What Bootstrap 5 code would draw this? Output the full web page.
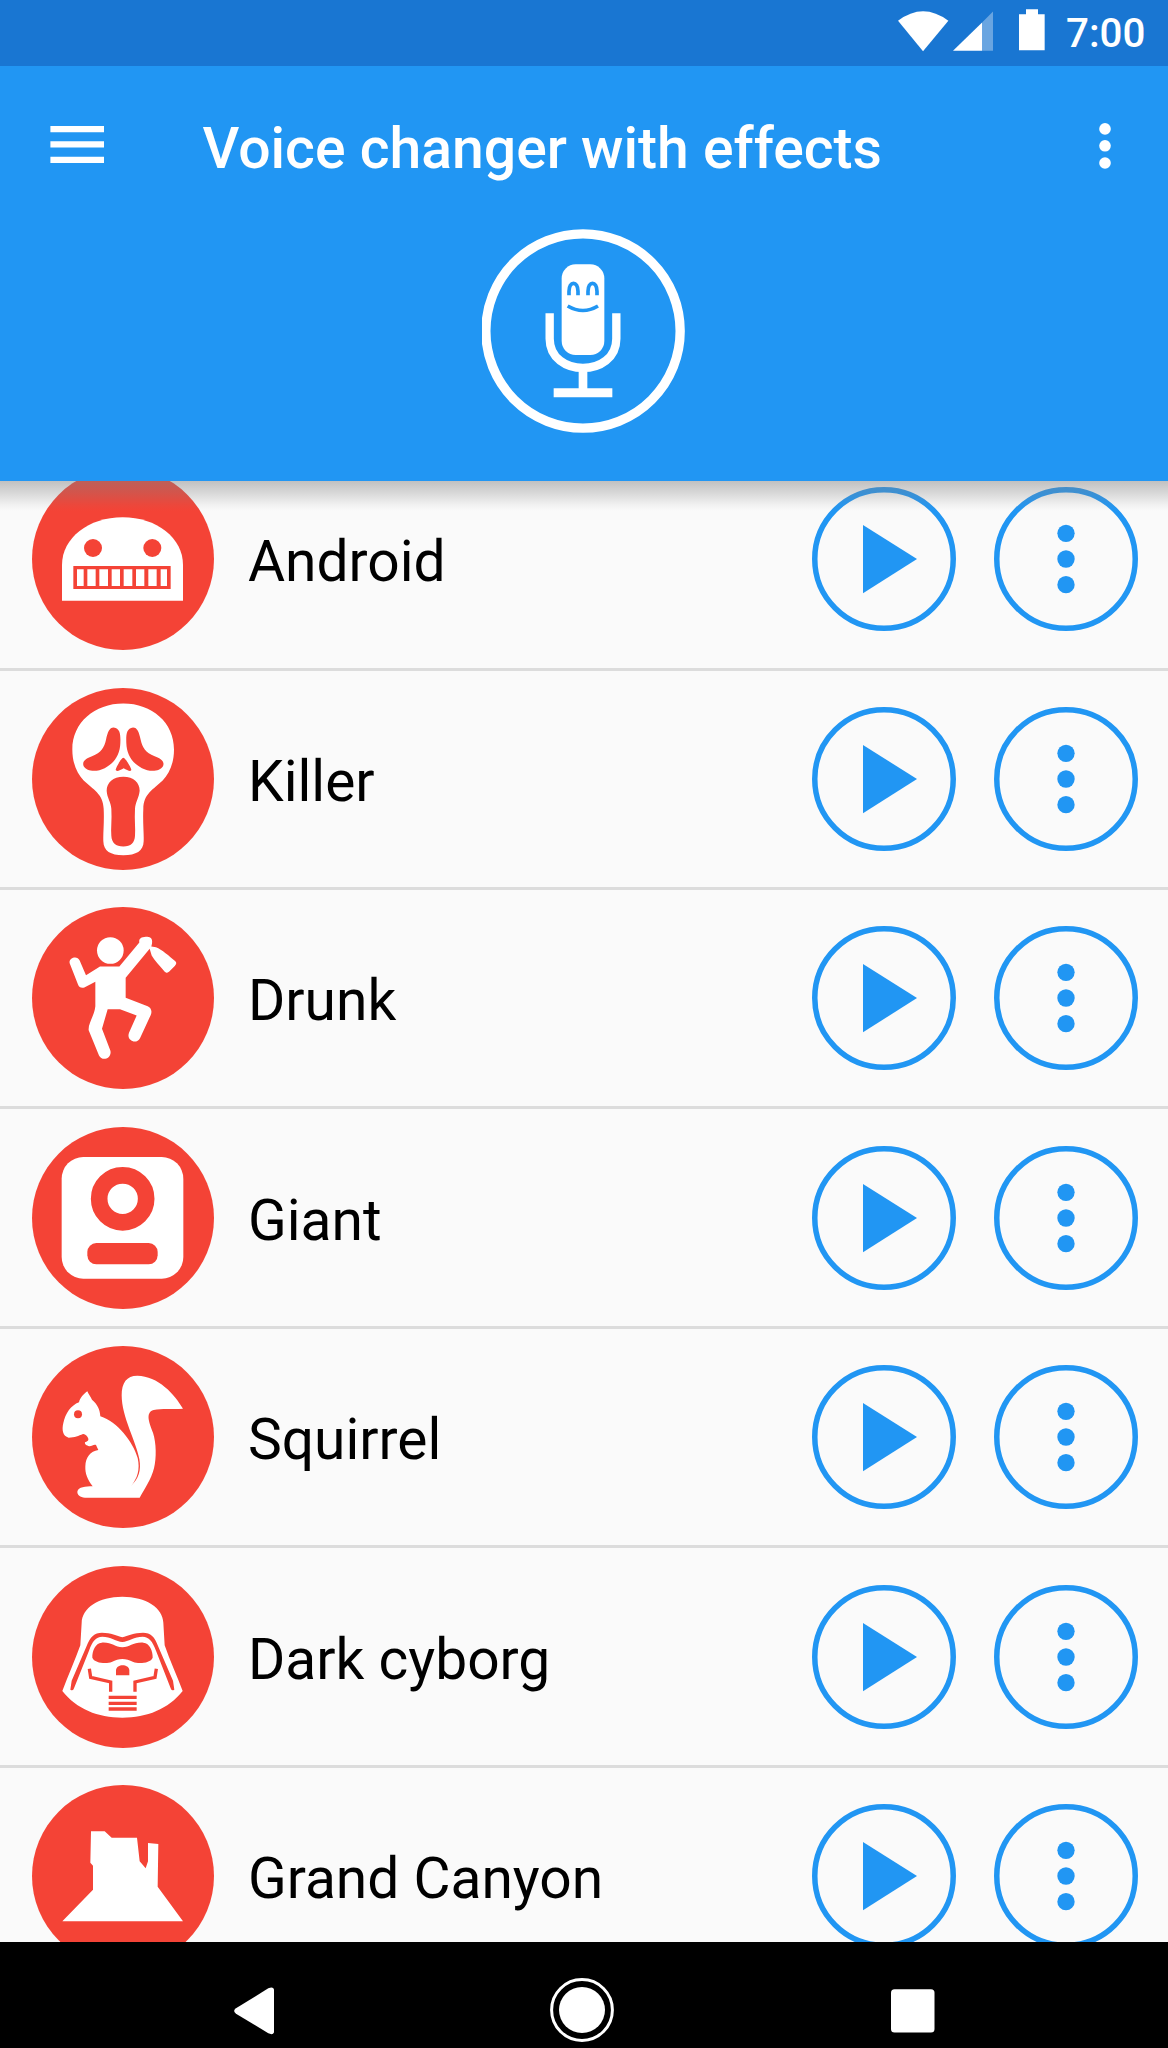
<!DOCTYPE html>
<html lang="en">
<head>
<meta charset="utf-8">
<meta name="viewport" content="width=device-width, initial-scale=1">
<title>Voice changer with effects</title>
<link href="https://cdn.jsdelivr.net/npm/bootstrap@5.3.0/dist/css/bootstrap.min.css" rel="stylesheet">
<style>
  :root { --vc-blue: #2196f3; --vc-dark: #1976d2; --vc-red: #f44336; }
  body { font-family: Roboto, "Liberation Sans", sans-serif; background: #fafafa; color: #000; }
  svg { display: block; flex: none; }
  .screen { width: 1168px; height: 2048px; }
  .statusbar { height: 66px; background: var(--vc-dark); padding-right: 24px; }
  .signal { margin-left: 4.6px; }
  .battery { margin-left: 25.4px; }
  .clock { font-size: 40.3px; font-weight: 500; line-height: 67px; width: 78px; margin-left: 21.3px; }
  .appbar { height: 415px; background: var(--vc-blue); z-index: 2; }
  .appbar::after { content: ""; position: absolute; left: 0; right: 0; top: 100%; height: 30px;
    background: linear-gradient(rgba(128,128,128,.47), rgba(128,128,128,.28) 40%, rgba(128,128,128,.07) 80%, rgba(128,128,128,0)); }
  .toolbar { height: 162.7px; padding: 0 57px 0 50px; }
  .app-title { font-size: 57.1px; font-weight: 500; line-height: 66px; margin-left: 98.6px; padding-top: 3px; white-space: nowrap; }
  .effects { margin-top: -29.9px; min-height: 0; }
  .effect { height: 219.45px; flex: none; border-bottom: 3px solid #dcdcdc; padding: 0 30.4px 0 32px; }
  .avatar { fill: #fff; stroke: none; background: var(--vc-red); width: 182px; height: 182px; }
  .avatar .cut { fill: var(--vc-red); }
  .avatar .cutline { fill: none; stroke: var(--vc-red); }
  .effect-name { font-size: 56.9px; line-height: 66px; margin-left: 34px; padding-top: 6px; }
  .round-btn svg { width: 144px; height: 144px; fill: var(--vc-blue); }
  .round-btn .ring { fill: none; stroke: var(--vc-blue); stroke-width: 16.5; }
  .round-btns { gap: 38px; }
  .softkeys { height: 106px; padding: 32px 0 0 233.7px; gap: 276.5px; z-index: 3; }
</style>
</head>
<body>
<div class="screen d-flex flex-column overflow-hidden">
  <div class="statusbar d-flex justify-content-end text-white flex-shrink-0">
    <svg width="50.4" height="66" viewBox="115 0 151 198" fill="#fff"><path d="M115 62Q190 5 266 62L190 154Z"/></svg>
    <svg class="signal" width="40" height="66" viewBox="280 0 121 198" fill="#fff"><path d="M368 67L401 34V153H368Z" opacity=".35"/><path d="M280 153L368 67V153Z"/></svg>
    <svg class="battery" width="26" height="66" viewBox="477 0 78 198" fill="#fff"><path d="M498 28H534V43H554V151H477V43H498Z"/></svg>
    <span class="clock">7:00</span>
  </div>

  <header class="appbar position-relative text-white flex-shrink-0">
    <div class="toolbar d-flex align-items-center">
      <svg width="54" height="42" viewBox="0 0 54 42" fill="#fff"><path d="M.4 0H54V6.3H.4ZM.4 15.3H54V21.6H.4ZM.4 30.7H54V37H.4Z"/></svg>
      <h1 class="app-title mb-0">Voice changer with effects</h1>
      <svg class="ms-auto" width="12" height="48" viewBox="0 0 12 48" fill="#fff"><circle cx="6" cy="5.9" r="5.8"/><circle cx="6" cy="22.8" r="5.8"/><circle cx="6" cy="40" r="5.8"/></svg>
    </div>
    <svg class="mx-auto" width="204" height="204" viewBox="66 56 612 612">
      <circle cx="369" cy="362" r="291.500" fill="none" stroke="#fff" stroke-width="28"/>
      <rect x="305" y="162" width="128" height="272" rx="42" fill="#fff"/>
      <g fill="none" stroke="#2196f3" stroke-width="11"><path d="M327 255V243C327 211 354 211 354 243V255M384 255V243C384 211 411 211 411 243V255"/><path d="M323 287Q369 314 414 287"/></g>
      <path d="M269 309V385C269 502 469 502 469 385V309" fill="none" stroke="#fff" stroke-width="25"/>
      <path d="M356 480H382V534H457V561H281V534H356Z" fill="#fff"/>
    </svg>
  </header>

  <main class="effects d-flex flex-column flex-fill overflow-hidden" id="effects">
    <div class="effect d-flex align-items-center">
      <svg class="avatar rounded-circle" viewBox="95 -5 546 546">
        <path d="M185 393V286C185 205 265 143 367 143S548 205 548 286V393Z"/>
        <circle class="cut" cx="278" cy="235" r="27"/><circle class="cut" cx="456" cy="235" r="27"/>
        <path class="cut" d="M219 289H511V358H219Z"/>
        <path d="M230 299H250V349H230ZM261 299H286V349H261ZM297 299H323V349H297ZM334 299H359V349H334ZM370 299H396V349H370ZM407 299H432V349H407ZM444 299H469V349H444ZM481 299H500V349H481Z"/>
      </svg>
      <span class="effect-name">Android</span>
    </div>
    <div class="effect d-flex align-items-center">
      <svg class="avatar rounded-circle" viewBox="35 22.5 546 546">
        <path d="M309 69C395 69 461 126 461 207C461 250 446 280 427 300C400 326 369 340 369 385C367 425 371 455 370 482C369 511 348 524 309 524S250 511 249 482C248 455 252 425 250 385C249 340 217 326 190 300C171 280 156 250 156 207C156 126 223 69 309 69Z"/>
        <path class="cut" d="M280 141C300 143 301 164 300 188C299 220 284 247 253 263C231 274 200 274 190 257C184 243 197 233 215 227C243 217 252 200 257 178C262 155 267 141 280 141Z"/>
        <path class="cut" d="M338 141C318 143 317 164 318 188C319 220 334 247 365 263C387 274 418 274 428 257C434 243 421 233 403 227C375 217 366 200 361 178C356 155 351 141 338 141Z"/>
        <path class="cut" d="M309 232C315 232 331 259 333 268C332 275 320 269 310 263C300 269 288 275 286 268C288 259 303 232 309 232Z"/>
        <path class="cut" d="M309 289C340 289 358 307 358 331C356 352 345 366 344 385C342 418 346 445 344 466C343 487 332 498 309 498S274 487 273 466C271 445 275 418 273 385C272 366 260 352 259 331C259 307 278 289 309 289Z"/>
      </svg>
      <span class="effect-name">Killer</span>
    </div>
    <div class="effect d-flex align-items-center">
      <svg class="avatar rounded-circle" viewBox="35 27.5 546 546">
        <circle cx="270" cy="158" r="40"/>
        <path d="M239 206H297L357 134C354 120 367 117 381 117C398 119 397 131 393 146L407 148C425 155 446 174 465 190C470 195 467 200 464 204L446 222C442 226 436 225 432 220C419 205 402 188 394 173L388 153L316 240V300L382 325C393 330 396 341 391 352L359 421C349 441 317 429 326 405L349 353L299 334H262L245 393L270 458C276 479 247 494 236 473L205 397C203 377 222 354 225 325V252L192 269C183 272 176 268 173 260L148 196C144 180 171 171 178 188L197 232Z"/>
      </svg>
      <span class="effect-name">Drunk</span>
    </div>
    <div class="effect d-flex align-items-center">
      <svg class="avatar rounded-circle" viewBox="35 26 546 546">
        <rect x="124" y="116" width="365" height="365" rx="65"/>
        <circle class="cutline" cx="307" cy="241.500" r="70.500" stroke-width="50"/>
        <rect class="cut" x="201" y="374" width="211" height="64" rx="27"/>
      </svg>
      <span class="effect-name">Giant</span>
    </div>
    <div class="effect d-flex align-items-center">
      <svg class="avatar rounded-circle" viewBox="35 24 546 546">
        <path d="M201 160C205 169 211 177 215 185C231 198 239 215 240 235C292 252 337 310 352 360C360 394 351 422 332 444C355 421 363 398 357 363C347 309 304 237 304 172C304 134 319 113 351 113C413 114 463 168 488 212C454 214 424 211 400 216C373 224 388 257 398 284C408 315 409 359 401 391C393 424 370 457 358 479H194C179 477 171 471 171 461C174 447 196 445 217 445C201 424 194 407 195 385C196 357 210 340 234 336L227 321C219 319 216 325 207 325C199 323 192 319 194 313C199 310 205 309 204 302C202 294 194 287 188 288C174 293 164 299 145 299C127 294 124 276 129 255C135 226 152 202 176 193C179 179 190 168 201 160Z"/>
        <circle class="cut" cx="173" cy="229" r="12"/>
      </svg>
      <span class="effect-name">Squirrel</span>
    </div>
    <div class="effect d-flex align-items-center">
      <svg class="avatar rounded-circle" viewBox="35 29 546 546">
        <path d="M306 121C377 121 428 155 429 199L433 267C448 312 470 359 487 404C444 458 380 484 306 484S169 458 126 404C143 359 164 312 180 267L184 199C185 155 235 121 306 121Z"/>
        <path class="cut" d="M150 400L154 373L198 271C210 240 222 229 245 229C271 229 290 238 306 243C322 238 342 229 368 229C391 229 403 240 414 271L458 373L462 400C455 404 453 401 451 396L407 283C396 253 386 242 367 241C342 241 324 256 306 257C288 256 271 241 246 241C226 242 217 253 206 283L161 396C159 401 157 404 150 400Z"/>
        <path class="cut" d="M244 259C275 257 283 273 306 273C329 273 338 257 369 259C388 260 398 285 397 304C391 321 354 323 339 317C327 311 317 308 306 308S286 311 274 317C259 323 222 321 216 304C215 285 225 260 244 259Z"/>
        <path class="cut" d="M287 357V341C289 322 325 322 327 341V357Z"/>
        <path class="cutline" stroke-width="10" d="M207 337L211 363L271 377V406M408 337L404 363L344 377V406"/>
        <path class="cut" d="M265 418H349V428H265ZM265 436H349V446H265ZM265 453H349V463H265Z"/>
      </svg>
      <span class="effect-name">Dark cyborg</span>
    </div>
    <div class="effect d-flex align-items-center">
      <svg class="avatar rounded-circle" viewBox="35 27 546 546">
        <path d="M212 166H253L274 185H350L358 256L376 277L383 256V201L414 204L412 332L488 436H126L218 341V269L210 260Z"/>
      </svg>
      <span class="effect-name">Grand Canyon</span>
    </div>
  </main>

  <nav class="softkeys bg-black d-flex flex-shrink-0 position-relative">
    <svg width="40.300" height="72" viewBox="641 594 121 216" fill="#fff"><path d="M744 637Q762 629 762 646V762Q762 780 744 772L647 713Q636 705 647 697Z"/></svg>
    <svg width="64" height="72" viewBox="0 0 64 72"><circle cx="32" cy="36" r="30.400" fill="none" stroke="#fff" stroke-width="3"/><circle cx="32" cy="36" r="23" fill="#fff"/></svg>
    <svg width="44" height="72" viewBox="0 0 44 72"><rect y="15.300" width="43.500" height="43.300" rx="3.500" fill="#fff"/></svg>
  </nav>
</div>

<template id="row-actions">
  <div class="round-btns d-flex ms-auto">
    <button type="button" class="round-btn rounded-circle border-0 bg-transparent p-0" aria-label="Play"><svg viewBox="65 52 432 432"><circle class="ring" cx="281" cy="268" r="207.700"/><path d="M218 166L380 268L218 371Z"/></svg></button>
    <button type="button" class="round-btn rounded-circle border-0 bg-transparent p-0" aria-label="More"><svg viewBox="611 52 432 432"><circle class="ring" cx="827" cy="268" r="207.700"/><circle cx="827" cy="191" r="26"/><circle cx="827" cy="268" r="26"/><circle cx="827" cy="345" r="26"/></svg></button>
  </div>
</template>
<script src="https://cdn.jsdelivr.net/npm/bootstrap@5.3.0/dist/js/bootstrap.bundle.min.js"></script>
<script>
  // Every effect gets the same pair of buttons.
  const actions = document.getElementById('row-actions');
  document.querySelectorAll('.effect').forEach(row => row.append(actions.content.cloneNode(true)));
</script>
</body>
</html>
